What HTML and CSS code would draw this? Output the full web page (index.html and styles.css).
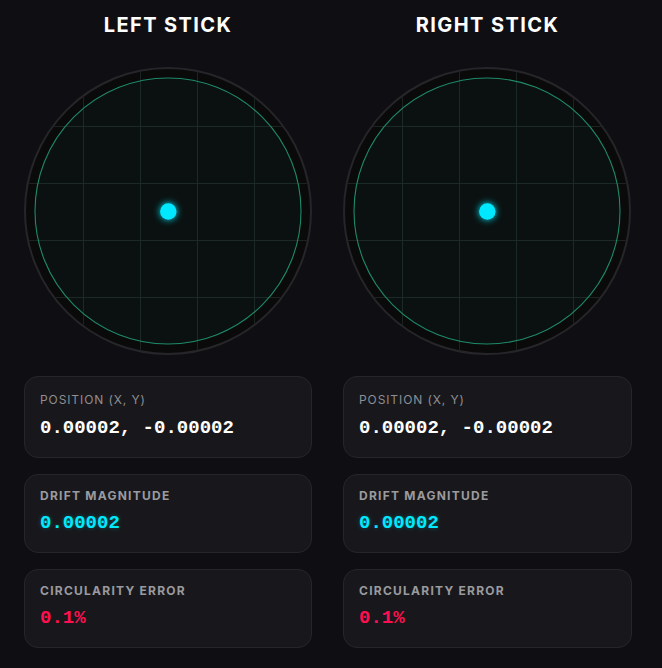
FILE: index.html
```html
<!DOCTYPE html>
<html lang="en">
<head>
<meta charset="utf-8">
<title>Stick Test</title>
<link rel="stylesheet" href="styles.css">
</head>
<body>
<main class="sticks">
  <section class="stick">
    <h2 class="stick-title">LEFT STICK</h2>
    <div class="pad">
      <svg class="pad-svg" viewBox="0 0 288 288" width="288" height="288">
        <defs>
          <clipPath id="clipL"><circle cx="144" cy="144" r="142"/></clipPath>
          <filter id="glowL" x="-200%" y="-200%" width="500%" height="500%">
            <feGaussianBlur stdDeviation="3.5" result="b"/>
            <feMerge><feMergeNode in="b"/><feMergeNode in="SourceGraphic"/></feMerge>
          </filter>
        </defs>
        <circle cx="144" cy="144" r="143" fill="#0a0a0b" stroke="#26262a" stroke-width="2"/>
        <g clip-path="url(#clipL)" stroke="#1c2422" stroke-width="1">
          <line x1="59.5" y1="0" x2="59.5" y2="288"/>
          <line x1="116.5" y1="0" x2="116.5" y2="288"/>
          <line x1="173.5" y1="0" x2="173.5" y2="288"/>
          <line x1="230.5" y1="0" x2="230.5" y2="288"/>
          <line x1="0" y1="59.5" x2="288" y2="59.5"/>
          <line x1="0" y1="116.5" x2="288" y2="116.5"/>
          <line x1="0" y1="173.5" x2="288" y2="173.5"/>
          <line x1="0" y1="230.5" x2="288" y2="230.5"/>
        </g>
        <circle cx="144" cy="144" r="133" fill="rgba(16,185,129,0.045)" stroke="#1f8a68" stroke-width="1.1"/>
        <circle cx="144.3" cy="144.5" r="8.2" fill="#00e8ff" filter="url(#glowL)"/>
      </svg>
    </div>
    <div class="stats">
      <div class="card card-pos">
        <div class="label label-light">POSITION (X, Y)</div>
        <div class="value value-white">0.00002, -0.00002</div>
      </div>
      <div class="card">
        <div class="label">DRIFT MAGNITUDE</div>
        <div class="value value-cyan">0.00002</div>
      </div>
      <div class="card">
        <div class="label">CIRCULARITY ERROR</div>
        <div class="value value-red">0.1%</div>
      </div>
    </div>
  </section>
  <section class="stick">
    <h2 class="stick-title">RIGHT STICK</h2>
    <div class="pad">
      <svg class="pad-svg" viewBox="0 0 288 288" width="288" height="288">
        <defs>
          <clipPath id="clipR"><circle cx="144" cy="144" r="142"/></clipPath>
          <filter id="glowR" x="-200%" y="-200%" width="500%" height="500%">
            <feGaussianBlur stdDeviation="3.5" result="b"/>
            <feMerge><feMergeNode in="b"/><feMergeNode in="SourceGraphic"/></feMerge>
          </filter>
        </defs>
        <circle cx="144" cy="144" r="143" fill="#0a0a0b" stroke="#26262a" stroke-width="2"/>
        <g clip-path="url(#clipR)" stroke="#1c2422" stroke-width="1">
          <line x1="59.5" y1="0" x2="59.5" y2="288"/>
          <line x1="116.5" y1="0" x2="116.5" y2="288"/>
          <line x1="173.5" y1="0" x2="173.5" y2="288"/>
          <line x1="230.5" y1="0" x2="230.5" y2="288"/>
          <line x1="0" y1="59.5" x2="288" y2="59.5"/>
          <line x1="0" y1="116.5" x2="288" y2="116.5"/>
          <line x1="0" y1="173.5" x2="288" y2="173.5"/>
          <line x1="0" y1="230.5" x2="288" y2="230.5"/>
        </g>
        <circle cx="144" cy="144" r="133" fill="rgba(16,185,129,0.045)" stroke="#1f8a68" stroke-width="1.1"/>
        <circle cx="144.3" cy="144.5" r="8.2" fill="#00e8ff" filter="url(#glowR)"/>
      </svg>
    </div>
    <div class="stats">
      <div class="card card-pos">
        <div class="label label-light">POSITION (X, Y)</div>
        <div class="value value-white">0.00002, -0.00002</div>
      </div>
      <div class="card">
        <div class="label">DRIFT MAGNITUDE</div>
        <div class="value value-cyan">0.00002</div>
      </div>
      <div class="card">
        <div class="label">CIRCULARITY ERROR</div>
        <div class="value value-red">0.1%</div>
      </div>
    </div>
  </section>
</main>
</body>
</html>
```

FILE: styles.css
```css
* { box-sizing: border-box; }

html, body {
  margin: 0;
  padding: 0;
  background: #0f0f13;
  height: 100%;
}

body {
  font-family: Inter, "Noto Sans", sans-serif;
  color: #fff;
}

.sticks {
  display: grid;
  grid-template-columns: 288px 289px;
  column-gap: 31px;
  padding: 13px 0 0 24px;
}

.stick {
  display: flex;
  flex-direction: column;
}

.stick-title {
  margin: 0;
  font-size: 20px;
  line-height: 24px;
  font-weight: 700;
  letter-spacing: 1.4px;
  text-align: center;
  color: #fff;
}

.pad {
  margin-top: 30px;
  width: 288px;
  height: 288px;
}

.pad-svg {
  display: block;
}

.stats {
  margin-top: 21px;
  display: flex;
  flex-direction: column;
  gap: 16px;
}

.card {
  background: #18181c;
  border: 1px solid #25252a;
  border-radius: 14px;
  padding: 13px 15px 17px;
  display: flex;
  flex-direction: column;
  gap: 7px;
}

.card-pos {
  padding-top: 15px;
  gap: 8px;
}

.label {
  font-size: 12px;
  line-height: 16px;
  font-weight: 700;
  letter-spacing: 1.25px;
  color: #9a9a9f;
}

.label-light {
  font-weight: 400;
  letter-spacing: 0.9px;
  color: #8e8e94;
}

.value {
  font-family: "Liberation Mono", "DejaVu Sans Mono", monospace;
  font-weight: 700;
  font-size: 19px;
  line-height: 24px;
}

.value-white { color: #ffffff; }
.value-cyan { color: #00eaff; text-shadow: 0 0 4px rgba(0, 234, 255, 0.3); }
.value-red { color: #ff0f4f; }
```
